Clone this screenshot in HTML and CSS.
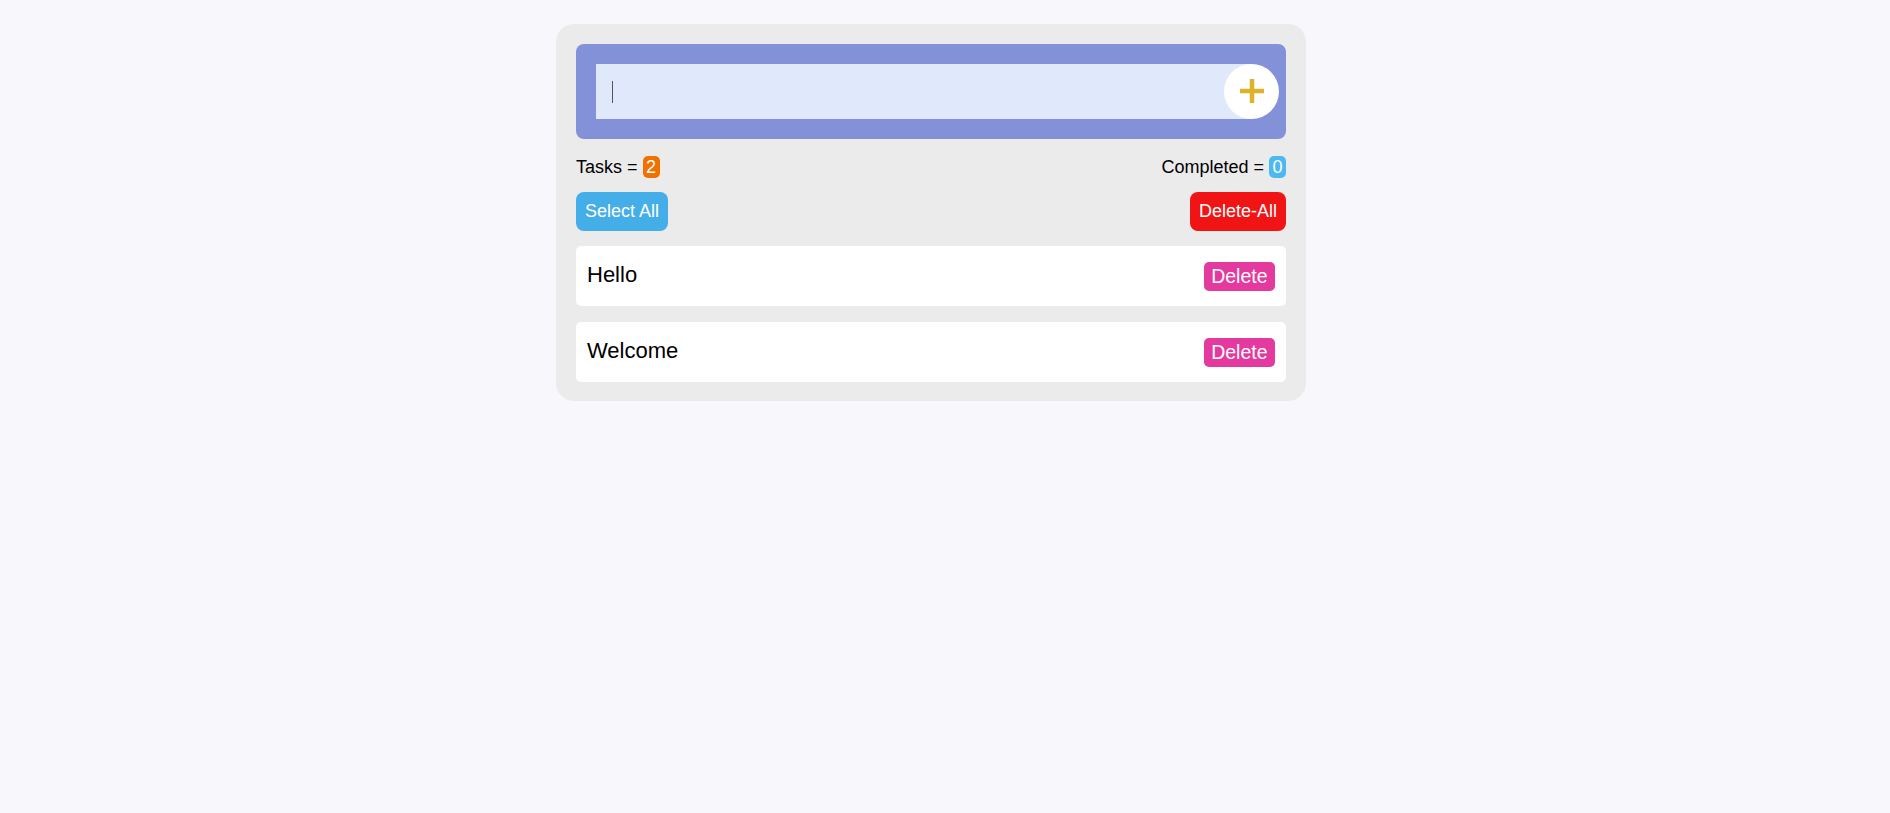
FILE: index.html
```html
<!DOCTYPE html>
<html lang="en">
<head>
<meta charset="utf-8">
<title>Todo</title>
<link rel="stylesheet" href="styles.css">
</head>
<body>
<div class="page">
  <div class="card">
    <div class="entry">
      <div class="entry-input"><span class="caret"></span></div>
      <button class="add-btn" aria-label="Add">
        <svg class="plus" width="24" height="24" viewBox="0 0 24 24"><path d="M12 0V24M0 12H24" stroke="#deb32a" stroke-width="4.5" fill="none"/></svg>
      </button>
    </div>
    <div class="stats">
      <span class="stat">Tasks = <span class="badge badge-orange">2</span></span>
      <span class="stat">Completed = <span class="badge badge-blue">0</span></span>
    </div>
    <div class="actions">
      <button class="btn btn-select">Select All</button>
      <button class="btn btn-delete-all">Delete-All</button>
    </div>
    <ul class="list">
      <li class="item"><span class="item-text">Hello</span><button class="del-btn">Delete</button></li>
      <li class="item"><span class="item-text">Welcome</span><button class="del-btn">Delete</button></li>
    </ul>
  </div>
</div>
</body>
</html>
```
FILE: styles.css
```css
* { box-sizing: border-box; }
html, body {
  margin: 0;
  padding: 0;
  background: #f8f8fc;
  font-family: "Liberation Sans", Arial, sans-serif;
  color: #000;
}
.page {
  padding: 24px 0 0 556px;
}
.card {
  width: 750px;
  background: #ebebeb;
  border-radius: 18px;
  padding: 20px 20px 19px 20px;
  display: flex;
  flex-direction: column;
}
.entry {
  background: #8291d8;
  border-radius: 8px;
  padding: 20px 7px 20px 20px;
  display: flex;
  align-items: center;
}
.entry-input {
  flex: 1;
  height: 55px;
  background: #e0e8fc;
  display: flex;
  align-items: center;
  padding-left: 16px;
}
.caret {
  width: 1px;
  height: 22px;
  background: #555;
}
.add-btn {
  width: 55px;
  height: 55px;
  border-radius: 50%;
  border: none;
  background: #fff;
  margin-left: -27px;
  padding: 0 0 2px 0;
  display: flex;
  align-items: center;
  justify-content: center;
}
.stats {
  display: flex;
  justify-content: space-between;
  align-items: center;
  margin-top: 17px;
  font-size: 18px;
  height: 22px;
}
.badge {
  display: inline-block;
  color: #fff;
  border-radius: 5px;
  padding: 0 3.5px;
  line-height: 22px;
  height: 22px;
}
.badge-orange { background: #f07000; }
.badge-blue { background: #4cb9f0; }
.actions {
  display: flex;
  justify-content: space-between;
  margin-top: 14px;
}
.btn {
  font-family: "Liberation Sans", Arial, sans-serif;
  font-size: 18px;
  color: #fff;
  border: none;
  border-radius: 8px;
  height: 39px;
  padding: 0 9px;
  line-height: 39px;
  white-space: nowrap;
}
.btn-select { background: #43aee8; }
.btn-delete-all { background: #f01414; }
.list {
  list-style: none;
  margin: 15px 0 0 0;
  padding: 0;
  display: flex;
  flex-direction: column;
  gap: 16px;
}
.item {
  background: #fff;
  border-radius: 5px;
  height: 60px;
  display: flex;
  align-items: center;
  justify-content: space-between;
  padding: 0 11px 0 11px;
}
.item-text {
  font-size: 22px;
  margin-top: -3px;
}
.del-btn {
  font-family: "Liberation Sans", Arial, sans-serif;
  font-size: 19.5px;
  color: #fff;
  background: #e43a9f;
  border: none;
  border-radius: 5px;
  height: 29px;
  line-height: 29px;
  padding: 0 7.5px;
  white-space: nowrap;
}
```
